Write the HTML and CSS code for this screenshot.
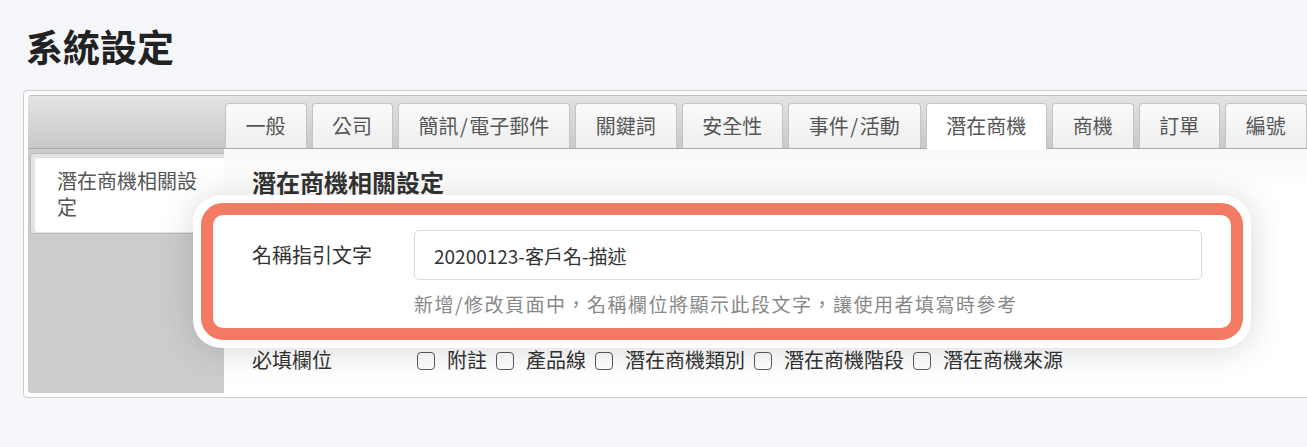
FILE: index.html
```html
<!DOCTYPE html>
<html lang="zh-Hant">
<head>
<meta charset="utf-8">
<title>系統設定</title>
<link rel="stylesheet" href="styles.css">
</head>
<body>
<div class="page">
  <h1 class="page-title">系統設定</h1>
  <div class="card">
    <div class="panel">
      <div class="tabbar">
        <ul class="tabs">
          <li class="tab">一般</li>
          <li class="tab">公司</li>
          <li class="tab">簡訊<span class="slash">/</span>電子郵件</li>
          <li class="tab">關鍵詞</li>
          <li class="tab">安全性</li>
          <li class="tab">事件<span class="slash">/</span>活動</li>
          <li class="tab active">潛在商機</li>
          <li class="tab">商機</li>
          <li class="tab">訂單</li>
          <li class="tab">編號</li>
        </ul>
      </div>
      <div class="panel-body">
        <aside class="sidebar">
          <div class="nav-wrap">
            <div class="nav-item">潛在商機相關設定</div>
          </div>
        </aside>
        <main class="content">
          <h2 class="section-title">潛在商機相關設定</h2>
          <div class="highlight">
            <div class="highlight-frame">
              <div class="form-row">
                <label class="field-label field-label-input" for="nameHint">名稱指引文字</label>
                <div class="field">
                  <input id="nameHint" class="text-input" type="text" value="20200123-客戶名-描述">
                  <p class="help">新增/修改頁面中，名稱欄位將顯示此段文字，讓使用者填寫時參考</p>
                </div>
              </div>
            </div>
          </div>
          <div class="form-row required-row">
            <span class="field-label">必填欄位</span>
            <div class="checks">
              <label class="check"><input type="checkbox"><span>附註</span></label>
              <label class="check"><input type="checkbox"><span>產品線</span></label>
              <label class="check"><input type="checkbox"><span>潛在商機類別</span></label>
              <label class="check"><input type="checkbox"><span>潛在商機階段</span></label>
              <label class="check"><input type="checkbox"><span>潛在商機來源</span></label>
            </div>
          </div>
        </main>
      </div>
    </div>
  </div>
</div>
</body>
</html>
```

FILE: styles.css
```css
* {
  box-sizing: border-box;
}

html,
body {
  margin: 0;
  padding: 0;
}

body {
  background: #f5f6fa;
  font-family: "Noto Sans CJK TC", "Noto Sans", sans-serif;
  color: #333;
  width: 1307px;
  height: 447px;
  overflow: hidden;
}

.page {
  width: 1400px;
  padding-left: 23px;
}

.page-title {
  margin: 0 0 0 3px;
  padding-top: 22px;
  height: 90px;
  font-size: 37px;
  line-height: 48px;
  font-weight: 700;
  color: #222;
}

.card {
  width: 1320px;
  background: #fff;
  border: 1px solid #cfcfcf;
  border-radius: 4px;
  padding: 4px;
}

.panel {
  border-radius: 4px;
  overflow: hidden;
  background: #ccc;
}

.tabbar {
  height: 54px;
  background: linear-gradient(#e3e3e3, #c9c9c9);
  border-top: 1px solid #bdbdbd;
  border-bottom: 1px solid #ababab;
  padding-left: 197px;
  display: flex;
  align-items: flex-end;
}

.tabs {
  list-style: none;
  margin: 0;
  padding: 0;
  display: flex;
  align-items: flex-end;
  gap: 5px;
}

.tab {
  flex-shrink: 0;
  height: 45px;
  padding: 0 20px 0 19.5px;
  border: 1px solid #c4c4c4;
  border-bottom: 0;
  border-radius: 4px 4px 0 0;
  background: linear-gradient(#fafafa, #efefef);
  font-size: 20px;
  line-height: 44px;
  color: #555;
  white-space: nowrap;
}

.slash {
  margin: 0 1.5px;
}

.tab.active {
  background: #fff;
  height: 46px;
  margin-bottom: -1px;
  position: relative;
}

.panel-body {
  display: flex;
}

.sidebar {
  width: 196px;
  flex-shrink: 0;
  background: #ccc;
  padding: 4px 0 0 2px;
}

.nav-wrap {
  background: #e3e3e3;
  border: 1px solid #bcbcbc;
  border-right: 0;
  border-radius: 4px 0 0 4px;
  padding: 4px 0 1px 4px;
}

.nav-item {
  background: #fff;
  border-radius: 3px 0 0 3px;
  padding: 10px 15px 12px 22px;
  font-size: 20px;
  line-height: 26px;
  color: #555;
}

.content {
  flex: 1;
  background: linear-gradient(#f8f8f8, #fff 40px);
  padding: 21px 0 21px 28px;
}

.section-title {
  margin: 0;
  font-size: 24px;
  line-height: 24px;
  font-weight: 700;
  color: #333;
}

.highlight {
  position: relative;
  margin: 1px 0 0 -59px;
  width: 1058px;
  padding: 8px;
  background: #fff;
  border-radius: 28px;
  box-shadow: 0 2px 34px rgba(0, 0, 0, 0.16);
}

.highlight-frame {
  border: 12px solid #f37b63;
  border-radius: 22px;
  background: #fff;
  padding: 15px 29px 12px 39px;
}

.form-row {
  display: grid;
  grid-template-columns: 162px 788px;
}

.field-label {
  font-size: 20px;
  color: #333;
}

.field-label-input {
  line-height: 50px;
}

.text-input {
  display: block;
  width: 788px;
  height: 50px;
  margin: 0;
  border: 1px solid #d9d9d9;
  border-radius: 5px;
  padding: 0 19px;
  font-family: inherit;
  font-size: 19px;
  color: #333;
  background: #fff;
  outline: none;
}

.help {
  margin: 12px 0 0;
  font-size: 19px;
  line-height: 24px;
  letter-spacing: 1.5px;
  color: #888;
}

.required-row {
  line-height: 24px;
  grid-template-columns: 162px auto;
}

.checks {
  display: flex;
  align-items: center;
  padding-left: 3px;
}

.check {
  display: inline-flex;
  align-items: center;
  font-size: 20px;
  color: #333;
  margin-right: 9px;
}

.check input {
  appearance: none;
  -webkit-appearance: none;
  flex-shrink: 0;
  width: 18px;
  height: 18px;
  margin: 2px 12px 0 0;
  border: 1.5px solid #5a5a5a;
  border-radius: 4px;
  background: #fff;
}
```
